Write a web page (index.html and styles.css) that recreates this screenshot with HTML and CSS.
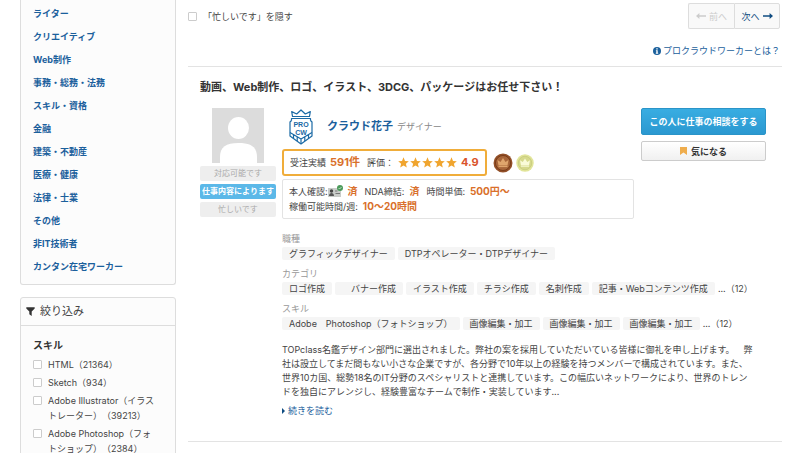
FILE: index.html
```
<!DOCTYPE html>
<html lang="ja">
<head>
    <meta charset="UTF-8">
    <meta name="viewport" content="width=device-width, initial-scale=1.0">
    <title>クラウドワーカー検索</title>
    <link rel="stylesheet" href="styles.css">
</head>
<body>

    <div class="container">
        <aside class="sidebar">
            <nav class="panel categories">
                <ul>
                    <li><a href="#">ライター</a></li>
                    <li><a href="#">クリエイティブ</a></li>
                    <li><a href="#">Web制作</a></li>
                    <li><a href="#">事務・総務・法務</a></li>
                    <li><a href="#">スキル・資格</a></li>
                    <li><a href="#">金融</a></li>
                    <li><a href="#">建築・不動産</a></li>
                    <li><a href="#">医療・健康</a></li>
                    <li><a href="#">法律・士業</a></li>
                    <li><a href="#">その他</a></li>
                    <li><a href="#">非IT技術者</a></li>
                    <li><a href="#">カンタン在宅ワーカー</a></li>
                </ul>
            </nav>

            <section class="panel filter">
                <h2 class="filter-title">
                    <svg class="icon" width="9" height="9" viewBox="0 0 9 9"><path d="M0.3 0.3h8.4v1.2L5.7 4.6V9L3.3 7.3V4.6L0.3 1.5z" fill="#333"/></svg>
                    絞り込み
                </h2>
                <div class="filter-body">
                    <h3>スキル</h3>
                    <label class="check"><input type="checkbox"><span>HTML（21364）</span></label>
                    <label class="check"><input type="checkbox"><span>Sketch（934）</span></label>
                    <label class="check"><input type="checkbox"><span>Adobe Illustrator（イラストレーター）（39213）</span></label>
                    <label class="check"><input type="checkbox"><span>Adobe Photoshop（フォトショップ）（2384）</span></label>
                </div>
            </section>
        </aside>

        <main class="content">
            <div class="toolbar">
                <label class="check"><input type="checkbox"><span>「忙しいです」を隠す</span></label>
                <div class="pager">
                    <button type="button" disabled>
                        <svg width="10" height="6" viewBox="0 0 10 6"><path d="M0 3l3.4-3v2.2H10v1.6H3.4V6z" fill="#ccc"/></svg>
                        前へ
                    </button>
                    <button type="button">
                        次へ
                        <svg width="10" height="6" viewBox="0 0 10 6"><path d="M10 3L6.6 0v2.2H0v1.6h6.6V6z" fill="#0f4c81"/></svg>
                    </button>
                </div>
            </div>
            <p class="about">
                <a href="#">
                    <svg width="8" height="8" viewBox="0 0 8 8"><circle cx="4" cy="4" r="4" fill="#1b609c"/><path d="M3.3 1.2h1.4v1.2H3.3zM2.9 3.2h1.8v2.6h.5v.9H2.8v-.9h.5V4.1h-.4z" fill="#fff"/></svg>
                    プロクラウドワーカーとは？
                </a>
            </p>

            <article class="worker">
                <h2 class="worker-title">動画、Web制作、ロゴ、イラスト、3DCG、パッケージはお任せ下さい！</h2>
                <div class="worker-body">
                    <div class="status">
                        <svg class="avatar" width="52" height="55" viewBox="0 0 52 55">
                            <rect width="52" height="55" fill="#dcdcdc"/>
                            <ellipse cx="26.5" cy="20" rx="10.5" ry="11" fill="#fff"/>
                            <path d="M8 55V49C8 39 14 35 26.500 35S45 39 45 49v6z" fill="#fff"/>
                        </svg>
                        <span class="badge">対応可能です</span>
                        <span class="badge active">仕事内容によります</span>
                        <span class="badge">忙しいです</span>
                    </div>

                    <div class="detail">
                        <div class="summary">
                            <div class="profile">
                                <div class="name-row">
                                    <svg class="pro" width="24" height="36" viewBox="0 0 24 36">
                                        <g fill="none" stroke="#1b6aa5" stroke-width="1.2" stroke-linejoin="round">
                                            <path d="M3.5 7.500L2.7 2.6l5 2.400L12 1l4.300 4 5-2.400L20.500 7.500z"/>
                                            <path d="M2.500 11.500V9.500h19v2M2.500 11.500L1 13v14l11 8 11-8V13l-1.500-1.500"/>
                                            <path d="M1 23.500l11 6.500 11-6.500M4.500 25.700v3.600M8.200 28v4M12 30v4.500M15.800 28v4M19.500 25.700v3.600"/>
                                        </g>
                                        <text x="12" y="18" text-anchor="middle" class="pro-text">PRO</text>
                                        <text x="12" y="26" text-anchor="middle" class="pro-text">CW</text>
                                    </svg>
                                    <a class="name" href="#">クラウド花子</a>
                                    <span class="job">デザイナー</span>
                                </div>

                                <div class="rating-row">
                                    <div class="rating">
                                        <span>受注実績</span>
                                        <strong>591件</strong>
                                        <span class="score-label">評価：</span>
                                        <svg width="59" height="11" viewBox="0 0 59 11">
                                            <defs>
                                                <path id="star" d="M5.500 0.300L7 3.900l3.800.3-2.900 2.500.9 3.800-3.300-2-3.300 2 .9-3.800L.2 4.200 4 3.900z"/>
                                            </defs>
                                            <g fill="#f0a52f">
                                                <use href="#star"/>
                                                <use href="#star" x="12"/>
                                                <use href="#star" x="24"/>
                                                <use href="#star" x="36"/>
                                                <use href="#star" x="48"/>
                                            </g>
                                        </svg>
                                        <strong class="score">4.9</strong>
                                    </div>
                                    <svg width="20" height="20" viewBox="0 0 20 20">
                                        <circle cx="10" cy="10" r="9.500" fill="#935028"/>
                                        <circle cx="10" cy="10" r="7.500" fill="#a8663a" stroke="#6f3513" stroke-width=".8"/>
                                        <path d="M5.500 12.500L4.500 7l3 2L10 5l2.500 4 3-2-1 5.500z" fill="#dfa56c"/>
                                        <path d="M5.500 13.500h9" stroke="#dfa56c" stroke-width="1.200"/>
                                    </svg>
                                    <svg width="18" height="18" viewBox="0 0 20 20">
                                        <circle cx="10" cy="10" r="9.700" fill="#e2e59a"/>
                                        <circle cx="10" cy="10" r="7.500" fill="#d6d98c" stroke="#c3c77a" stroke-width=".8"/>
                                        <path d="M5.500 12.500L4.500 7l3 2L10 5l2.500 4 3-2-1 5.500z" fill="#fafbd8"/>
                                        <path d="M5.500 13.500h9" stroke="#fafbd8" stroke-width="1.200"/>
                                    </svg>
                                </div>

                                <div class="conditions">
                                    <div class="line">
                                        <span class="term">本人確認:<svg width="15" height="13" viewBox="0 0 15 13"><rect y="3" width="13" height="9" fill="#c9ccc9"/><circle cx="3.500" cy="6" r="1.700" fill="#444"/><path d="M1 11c0-4 5-4 5 0z" fill="#555"/><path d="M7 6h2.500M7.500 8.500H12" stroke="#777" stroke-width="1.200"/><circle cx="12" cy="3" r="3" fill="#4b9a5b"/><path d="M10.600 3l1 1 1.900-2" fill="none" stroke="#d8f0dc" stroke-width=".8"/></svg></span>
                                        <strong>済</strong>
                                        <span class="next">NDA締結:</span>
                                        <strong>済</strong>
                                        <span class="next">時間単価:</span>
                                        <strong>500円〜</strong>
                                    </div>
                                    <div class="line">
                                        <span>稼働可能時間/週:</span>
                                        <strong>10〜20時間</strong>
                                    </div>
                                </div>
                            </div>

                            <div class="actions">
                                <button type="button" class="btn btn-primary">この人に仕事の相談をする</button>
                                <button type="button" class="btn btn-default">
                                    <svg width="7" height="8" viewBox="0 0 7 8"><path d="M0 0h7v8L3.500 5.500 0 8z" fill="#efad4d"/></svg>
                                    気になる
                                </button>
                            </div>
                        </div>

                        <dl class="tags">
                            <dt>職種</dt>
                            <dd>
                                <span class="tag">グラフィックデザイナー</span>
                                <span class="tag">DTPオペレーター・DTPデザイナー</span>
                            </dd>
                            <dt>カテゴリ</dt>
                            <dd>
                                <span class="tag">ロゴ作成</span>
                                <span class="tag">　バナー作成</span>
                                <span class="tag">イラスト作成</span>
                                <span class="tag">チラシ作成</span>
                                <span class="tag">名刺作成</span>
                                <span class="tag">記事・Webコンテンツ作成</span>
                                <span>...（12）</span>
                            </dd>
                            <dt>スキル</dt>
                            <dd>
                                <span class="tag">Adobe　Photoshop（フォトショップ）</span>
                                <span class="tag">画像編集・加工</span>
                                <span class="tag">画像編集・加工</span>
                                <span class="tag">画像編集・加工</span>
                                <span>...（12）</span>
                            </dd>
                        </dl>

                        <p class="description">
                            TOPclass名鑑デザイン部門に選出されました。弊社の案を採用していただいている皆様に御礼を申し上げます。　弊<br>
                            社は設立してまだ間もない小さな企業ですが、各分野で10年以上の経験を持つメンバーで構成されています。また、<br>
                            世界10カ国、総勢18名のIT分野のスペシャリストと連携しています。この幅広いネットワークにより、世界のトレン<br>
                            ドを独自にアレンジし、経験豊富なチームで制作・実装しています...
                        </p>
                        <a class="more" href="#">
                            <svg width="3" height="6" viewBox="0 0 3 6"><path d="M0 0l3 3-3 3z" fill="#0f4c81"/></svg>
                            続きを読む
                        </a>
                    </div>
                </div>
            </article>
        </main>
    </div>

</body>
</html>
```
FILE: styles.css
```
* {
    box-sizing: border-box;
}

body {
    margin: 0;
    background: #fff;
    color: #444;
    font-family: Inter, "Noto Sans CJK JP", sans-serif;
    font-size: 9px;
    line-height: 15px;
    text-spacing-trim: space-all;
}

a {
    color: #1b609c;
    text-decoration: none;
}

h2, h3, p, ul, dl, dd {
    margin: 0;
    padding: 0;
}

svg {
    flex: none;
}

button {
    font: inherit;
    cursor: pointer;
}

.container {
    display: flex;
    align-items: flex-start;
    gap: 12px;
    padding: 0 17px 0 20px;
}

/* サイドバー */
.sidebar {
    flex: 0 0 156px;
}

.panel {
    background: #fcfcfc;
    border: 1px solid #ddd;
    border-radius: 3px;
}

.categories {
    border-top: 0;
    border-radius: 0 0 3px 3px;
    padding: 2px 12px 6px;
    margin-bottom: 12px;
}

.categories ul {
    list-style: none;
}

.categories a {
    display: block;
    line-height: 23px;
    font-weight: bold;
}

.filter-title {
    display: flex;
    align-items: center;
    gap: 5px;
    height: 28px;
    padding: 0 5px;
    border-bottom: 1px solid #ddd;
    font-size: 11px;
    font-weight: normal;
}

.filter-body {
    padding: 12px 17px 12px 12px;
}

.filter-body h3 {
    margin-bottom: 4px;
    font-size: 10px;
    color: #333;
}

.check {
    display: flex;
    align-items: flex-start;
    gap: 6px;
    margin-bottom: 3px;
}

.check input {
    appearance: none;
    flex: none;
    width: 9px;
    height: 9px;
    margin: 3px 0 0;
    border: 1px solid #ccc;
    border-radius: 1px;
    background: #fff;
}

/* メイン */
.content {
    flex: 1;
    min-width: 0;
}

.toolbar {
    display: flex;
    justify-content: space-between;
    align-items: center;
    padding: 3px 2px 0 0;
}

.toolbar .check {
    margin: 0;
}

.pager {
    display: flex;
}

.pager button {
    display: flex;
    align-items: center;
    justify-content: center;
    gap: 3px;
    width: 46px;
    height: 26px;
    padding: 0;
    border: 1px solid #ddd;
    border-radius: 0 2px 2px 0;
    background: #f9f9f9;
    color: #0f4c81;
}

.pager button:first-child {
    border-right: 0;
    border-radius: 2px 0 0 2px;
    color: #ccc;
}

.about {
    padding: 14px 2px 8px 0;
}

.about a {
    display: flex;
    align-items: center;
    justify-content: flex-end;
    gap: 2px;
}

.worker {
    padding: 12px 12px 23px;
    border-top: 1px solid #e3e3e3;
    border-bottom: 1px solid #e3e3e3;
}

.worker-title {
    margin-bottom: 13px;
    font-size: 11px;
    line-height: 16px;
    color: #333;
}

.worker-body {
    display: flex;
    gap: 6px;
}

.status {
    display: flex;
    flex: 0 0 76px;
    flex-direction: column;
    align-items: center;
    gap: 3px;
}

.badge {
    width: 100%;
    border-radius: 2px;
    background: #eee;
    color: #aaa;
    font-size: 8px;
    text-align: center;
    white-space: nowrap;
}

.badge.active {
    background: #5bb8e8;
    color: #fff;
    font-weight: bold;
}

.detail {
    flex: 1;
    min-width: 0;
}

.summary {
    display: flex;
    gap: 7px;
    margin-bottom: 12px;
}

.profile {
    flex: 1;
}

.name-row {
    display: flex;
    align-items: center;
    height: 37px;
    margin-bottom: 4px;
    padding-left: 7px;
}

.pro-text {
    fill: #1b6aa5;
    font-family: "Liberation Sans", Arial, sans-serif;
    font-size: 7px;
    font-weight: bold;
}

.name {
    margin: 0 4px 0 14px;
    font-size: 11px;
    font-weight: bold;
}

.job {
    color: #888;
}

.rating-row {
    display: flex;
    align-items: center;
    gap: 3px;
    margin-bottom: 3px;
}

.rating {
    display: flex;
    align-items: center;
    gap: 4px;
    height: 27px;
    margin-right: 3px;
    padding: 0 6px;
    border: 2px solid #f0ad3a;
    border-radius: 3px;
}

.profile strong {
    color: #d9702b;
    font-size: 10px;
}

.profile .rating strong {
    font-size: 11px;
}

.profile .rating .score {
    color: #d9532b;
}

.score-label {
    margin-left: 3px;
}

.conditions {
    padding: 4px 6px;
    border: 1px solid #e3e3e3;
    border-radius: 2px;
}

.line {
    display: flex;
    align-items: center;
    gap: 5px;
}

.term {
    display: flex;
    align-items: center;
}

.next {
    margin-left: 2px;
}

.actions {
    display: flex;
    flex: 0 0 125px;
    flex-direction: column;
    gap: 6px;
    margin-right: 4px;
}

.btn {
    display: flex;
    align-items: center;
    justify-content: center;
    gap: 4px;
    padding: 0;
    border-radius: 2px;
}

.btn-primary {
    height: 27px;
    border: 1px solid #2a94c8;
    background: linear-gradient(#38ade2, #2b98d0);
    color: #fff;
    font-weight: bold;
}

.btn-default {
    height: 20px;
    border: 1px solid #ccc;
    background: linear-gradient(#fff, #f0f0f0);
    color: #333;
    font-weight: bold;
}

.tags dt {
    color: #999;
}

.tags dd {
    display: flex;
    gap: 3px;
    margin: 1px 0 6px;
    line-height: 13px;
    white-space: nowrap;
}

.tag {
    padding: 0 7px;
    border-radius: 2px;
    background: #f5f5f5;
}

.description {
    margin: 13px 0 4px;
    line-height: 14px;
}

.more {
    display: flex;
    align-items: center;
    gap: 3px;
}
```
